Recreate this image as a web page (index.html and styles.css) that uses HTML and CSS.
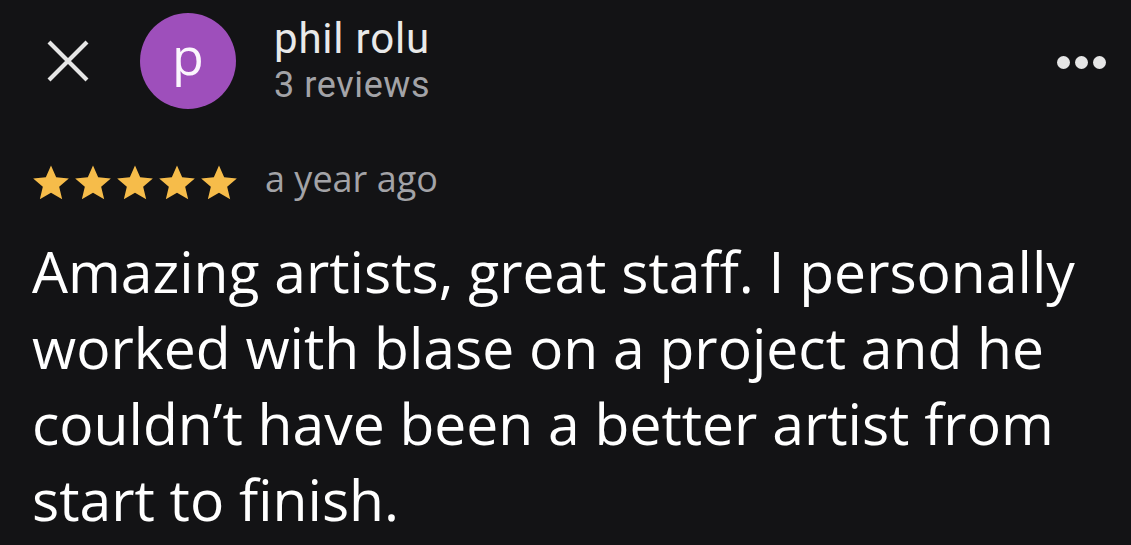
FILE: index.html
```html
<!DOCTYPE html>
<html>
<head>
<meta charset="utf-8">
<link rel="stylesheet" href="styles.css">
</head>
<body>
<div class="review">
  <header class="top">
    <svg class="close" viewBox="0 0 42 42" width="42" height="42"><path d="M2 2 L40 40 M40 2 L2 40" stroke="#e6e6e6" stroke-width="4.2"/></svg>
    <div class="avatar">p</div>
    <div class="who">
      <div class="name">phil rolu</div>
      <div class="count">3 reviews</div>
    </div>
    <div class="more"><span></span><span></span><span></span></div>
  </header>
  <div class="meta">
    <div class="stars">
      <svg viewBox="0 0 24 24"><path d="M12 1.5l3.1 7.1 7.6.7-5.8 5 1.8 7.5L12 17.8 5.3 21.8l1.8-7.5-5.8-5 7.6-.7z"/></svg>
      <svg viewBox="0 0 24 24"><path d="M12 1.5l3.1 7.1 7.6.7-5.8 5 1.8 7.5L12 17.8 5.3 21.8l1.8-7.5-5.8-5 7.6-.7z"/></svg>
      <svg viewBox="0 0 24 24"><path d="M12 1.5l3.1 7.1 7.6.7-5.8 5 1.8 7.5L12 17.8 5.3 21.8l1.8-7.5-5.8-5 7.6-.7z"/></svg>
      <svg viewBox="0 0 24 24"><path d="M12 1.5l3.1 7.1 7.6.7-5.8 5 1.8 7.5L12 17.8 5.3 21.8l1.8-7.5-5.8-5 7.6-.7z"/></svg>
      <svg viewBox="0 0 24 24"><path d="M12 1.5l3.1 7.1 7.6.7-5.8 5 1.8 7.5L12 17.8 5.3 21.8l1.8-7.5-5.8-5 7.6-.7z"/></svg>
    </div>
    <span class="ago">a year ago</span>
  </div>
  <p class="text">Amazing artists, great staff. I personally worked with blase on a project and he couldn’t have been a better artist from start to finish.</p>
</div>
</body>
</html>
```

FILE: styles.css
```css
html, body {
  margin: 0;
  padding: 0;
  background: #131315;
}
body {
  width: 1131px;
  height: 545px;
  overflow: hidden;
  font-family: "Open Sans", "Noto Sans", sans-serif;
  color: #ffffff;
}
.review {
  padding: 13px 25px 0 0;
}
.top {
  display: flex;
  align-items: center;
  height: 96px;
}
.close {
  width: 42px;
  height: 42px;
  margin-left: 47px;
  flex: none;
}
.avatar {
  flex: none;
  width: 96px;
  height: 96px;
  border-radius: 50%;
  background: #9e4fbb;
  color: #fbf6fd;
  display: flex;
  align-items: center;
  justify-content: center;
  font-size: 52px;
  line-height: 1;
  margin-left: 51px;
  padding-bottom: 12px;
  box-sizing: border-box;
}
.who {
  margin-left: 38px;
  margin-top: 2px;
  align-self: flex-start;
  font-family: Roboto, "Open Sans", sans-serif;
}
.name {
  font-size: 42px;
  line-height: 48px;
  letter-spacing: 0.8px;
  color: #e9e9e9;
}
.count {
  font-size: 36px;
  line-height: 44px;
  letter-spacing: 0.6px;
  color: #a3a3a7;
}
.more {
  margin-left: auto;
  display: flex;
  gap: 5px;
  margin-top: 2px;
}
.more span {
  width: 13px;
  height: 13px;
  border-radius: 50%;
  background: #e6e6e6;
}
.meta {
  display: flex;
  align-items: flex-start;
  margin-top: 54px;
  padding-left: 31px;
  height: 40px;
}
.stars {
  display: flex;
  gap: 2px;
}
.stars svg {
  width: 40px;
  height: 40px;
  fill: #f6bc4a;
}
.ago {
  margin-left: 26px;
  font-size: 36px;
  line-height: 38px;
  margin-top: -3px;
  color: #a3a3a7;
}
.text {
  margin: 30px 0 0 0;
  padding-left: 32px;
  font-size: 57px;
  line-height: 76px;
  color: #ffffff;
}
```
